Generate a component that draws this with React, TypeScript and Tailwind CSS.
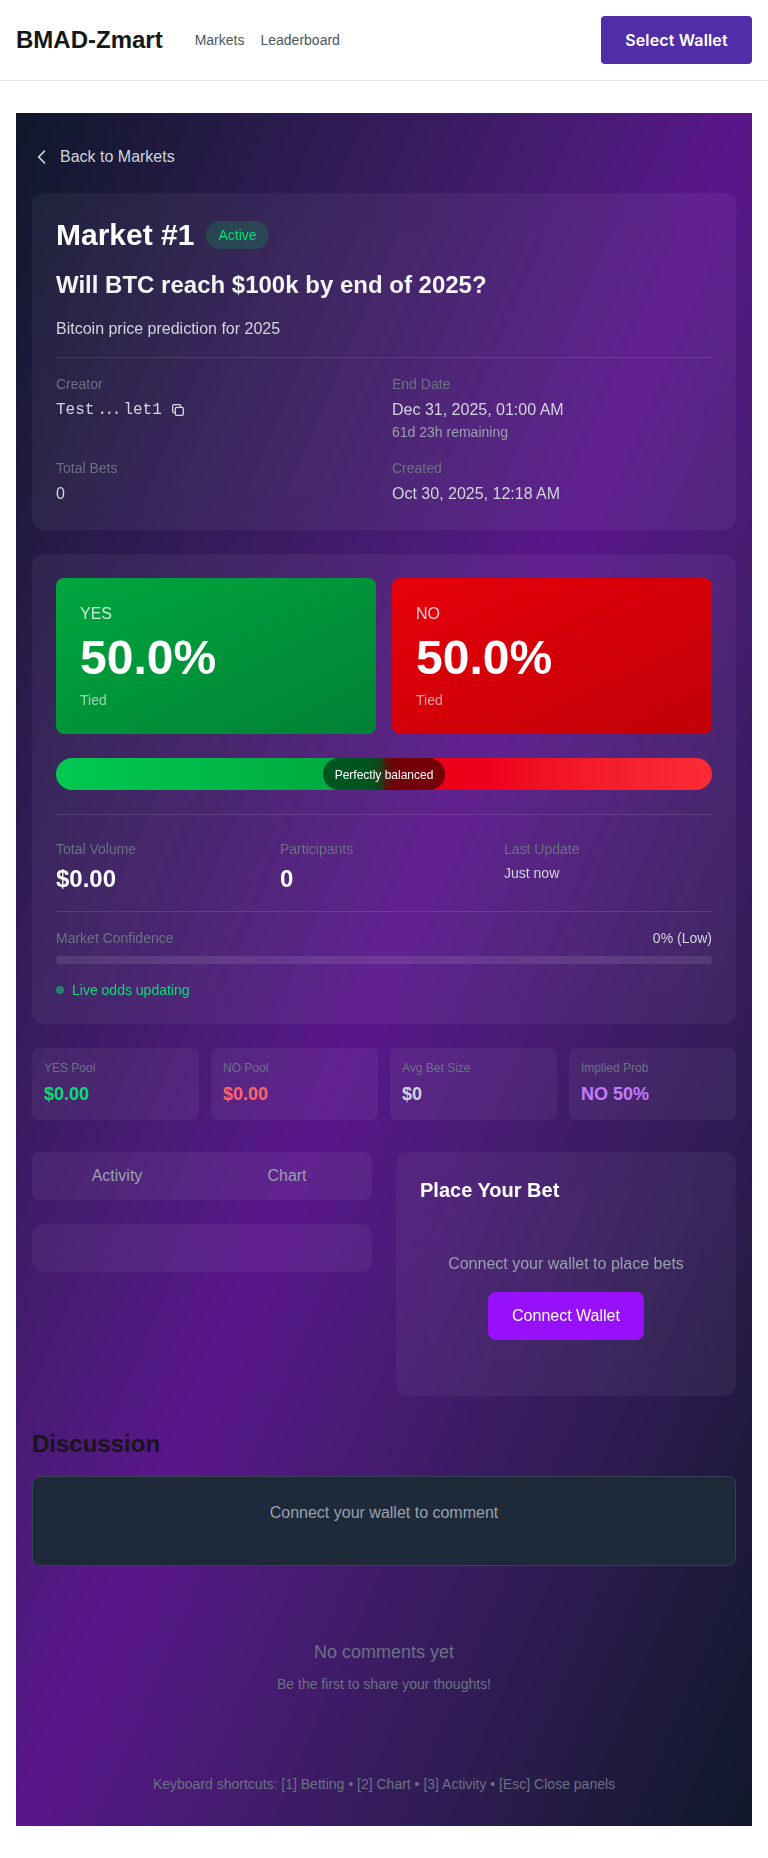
import React from "react";

function Field({ label, children }: { label: string; children: React.ReactNode }) {
  return (
    <div>
      <div className="mb-1 text-sm text-gray-500">{label}</div>
      {children}
    </div>
  );
}

function OddsCard({ side, tone }: { side: string; tone: string }) {
  return (
    <div className={`rounded-lg bg-linear-to-br p-6 text-white ${tone}`}>
      <div className="mb-2 opacity-80">{side}</div>
      <div className="mb-2 text-5xl font-bold">50.0%</div>
      <div className="text-sm opacity-60">Tied</div>
    </div>
  );
}

function Stat({ label, value, color }: { label: string; value: string; color: string }) {
  return (
    <div className="rounded-lg bg-white/5 p-3">
      <div className="mb-1 text-xs text-gray-500">{label}</div>
      <div className={`text-lg font-bold ${color}`}>{value}</div>
    </div>
  );
}

function Header() {
  return (
    <header className="flex items-center justify-between border-b border-gray-200 px-4 py-4">
      <div className="flex items-center gap-8">
        <div className="text-2xl font-bold text-[#171717]">BMAD-Zmart</div>
        <nav className="flex gap-4 text-sm text-gray-600">
          <a>Markets</a>
          <a>Leaderboard</a>
        </nav>
      </div>
      <button className="h-12 w-[151px] rounded bg-[#512da8] text-center font-['Inter',sans-serif] text-base font-semibold tracking-[0.15px] whitespace-nowrap text-white">
        Select Wallet
      </button>
    </header>
  );
}

function MarketCard() {
  return (
    <section className="mb-6 rounded-xl bg-white/5 p-6 backdrop-blur-lg">
      <div className="mb-4 flex items-center gap-3">
        <h1 className="text-3xl font-bold text-white">Market #1</h1>
        <span className="rounded-full bg-green-500/20 px-3 py-1 text-sm text-green-400">Active</span>
      </div>
      <h2 className="mb-4 text-2xl font-semibold text-gray-100">Will BTC reach $100k by end of 2025?</h2>
      <p className="mb-4 text-gray-300">Bitcoin price prediction for 2025</p>
      <div className="grid grid-cols-2 gap-4 border-t border-white/10 pt-4 text-gray-300">
        <Field label="Creator">
          <div className="flex h-6 items-center gap-2">
            <span className="font-['Liberation_Mono',monospace]">
              Test<span className="inline-block w-[29px] pl-[3px] tracking-[-2.4px]">...</span>let1
            </span>
            <svg className="size-4" viewBox="0 0 24 24" fill="none" stroke="currentColor" strokeWidth="2" strokeLinecap="round" strokeLinejoin="round">
              <path d="M8 16H6a2 2 0 01-2-2V6a2 2 0 012-2h8a2 2 0 012 2v2m-6 12h8a2 2 0 002-2v-8a2 2 0 00-2-2h-8a2 2 0 00-2 2v8a2 2 0 002 2z" />
            </svg>
          </div>
        </Field>
        <Field label="End Date">
          <div>Dec 31, 2025, 01:00 AM</div>
          <div className="text-sm text-gray-400">61d 23h remaining</div>
        </Field>
        <Field label="Total Bets">
          <div>0</div>
        </Field>
        <Field label="Created">
          <div>Oct 30, 2025, 12:18 AM</div>
        </Field>
      </div>
    </section>
  );
}

function OddsPanel() {
  return (
    <section className="mb-6 rounded-xl bg-white/5 p-6 backdrop-blur-lg">
      <div className="mb-6 grid grid-cols-2 gap-4">
        <OddsCard side="YES" tone="from-green-600 to-green-700" />
        <OddsCard side="NO" tone="from-red-600 to-red-700" />
      </div>
      <div className="relative mb-6 flex h-8 overflow-hidden rounded-full">
        <div className="w-1/2 bg-linear-to-r from-green-500 to-green-600" />
        <div className="w-1/2 bg-linear-to-r from-red-600 to-red-500" />
        <div className="absolute inset-0 flex justify-center">
          <span className="flex items-center rounded-full bg-black/50 px-3 pt-0.5 text-xs text-white backdrop-blur-sm">
            Perfectly balanced
          </span>
        </div>
      </div>
      <div className="mb-4 grid grid-cols-3 gap-4 border-t border-white/10 pt-6">
        <Field label="Total Volume">
          <div className="text-2xl font-bold text-white">$0.00</div>
        </Field>
        <Field label="Participants">
          <div className="text-2xl font-bold text-white">0</div>
        </Field>
        <Field label="Last Update">
          <div className="text-sm text-gray-300">Just now</div>
        </Field>
      </div>
      <div className="border-t border-white/10 pt-4">
        <div className="mb-2 flex justify-between text-sm">
          <span className="text-gray-500">Market Confidence</span>
          <span className="text-gray-300">0% (Low)</span>
        </div>
        <div className="h-2 rounded-full bg-white/10" />
      </div>
      <div className="mt-4 flex items-center gap-2 text-sm text-green-400">
        <span className="size-2 rounded-full bg-green-400 opacity-50" />
        Live odds updating
      </div>
    </section>
  );
}

export default function App() {
  return (
    <div className="min-h-[1858px] bg-white font-['Liberation_Sans',Arial,sans-serif] text-base text-[#171717] antialiased">
      <Header />
      <main className="px-4 py-8">
        <div className="bg-linear-to-br from-slate-900 via-purple-900 to-slate-900 px-4 py-8">
          <a className="mb-6 flex items-center gap-2 text-gray-300">
            <svg className="size-5" viewBox="0 0 24 24" fill="none" stroke="currentColor" strokeWidth="2" strokeLinecap="round" strokeLinejoin="round">
              <path d="M15 19l-7-7 7-7" />
            </svg>
            Back to Markets
          </a>
          <MarketCard />
          <OddsPanel />
          <div className="mb-8 grid grid-cols-4 gap-3">
            <Stat label="YES Pool" value="$0.00" color="text-green-400" />
            <Stat label="NO Pool" value="$0.00" color="text-red-400" />
            <Stat label="Avg Bet Size" value="$0" color="text-gray-300" />
            <Stat label="Implied Prob" value="NO 50%" color="text-purple-400" />
          </div>
          <div className="mb-8 grid grid-cols-2 gap-6">
            <div>
              <div className="mb-6 grid h-12 grid-cols-2 items-center rounded-lg bg-white/5 text-center text-gray-400">
                <span>Activity</span>
                <span>Chart</span>
              </div>
              <div className="h-12 rounded-xl bg-white/5 backdrop-blur-lg" />
            </div>
            <section className="rounded-xl bg-white/5 p-6 backdrop-blur-lg">
              <h3 className="mb-4 text-xl font-bold text-white">Place Your Bet</h3>
              <div className="py-8 text-center">
                <p className="mb-4 text-gray-400">Connect your wallet to place bets</p>
                <button className="h-12 rounded-lg bg-purple-600 px-6 text-white">Connect Wallet</button>
              </div>
            </section>
          </div>
          <h2 className="mb-4 text-2xl font-bold">Discussion</h2>
          <div className="mb-6 rounded-lg border border-gray-700 bg-gray-800 p-6 text-center">
            <p className="mb-4 text-gray-400">Connect your wallet to comment</p>
          </div>
          <div className="py-12 text-center text-gray-500">
            <p className="mb-2 text-lg">No comments yet</p>
            <p className="text-sm">Be the first to share your thoughts!</p>
          </div>
          <div className="mt-8 text-center text-sm text-gray-500">
            Keyboard shortcuts: [1] Betting • [2] Chart • [3] Activity • [Esc] Close panels
          </div>
        </div>
      </main>
    </div>
  );
}
